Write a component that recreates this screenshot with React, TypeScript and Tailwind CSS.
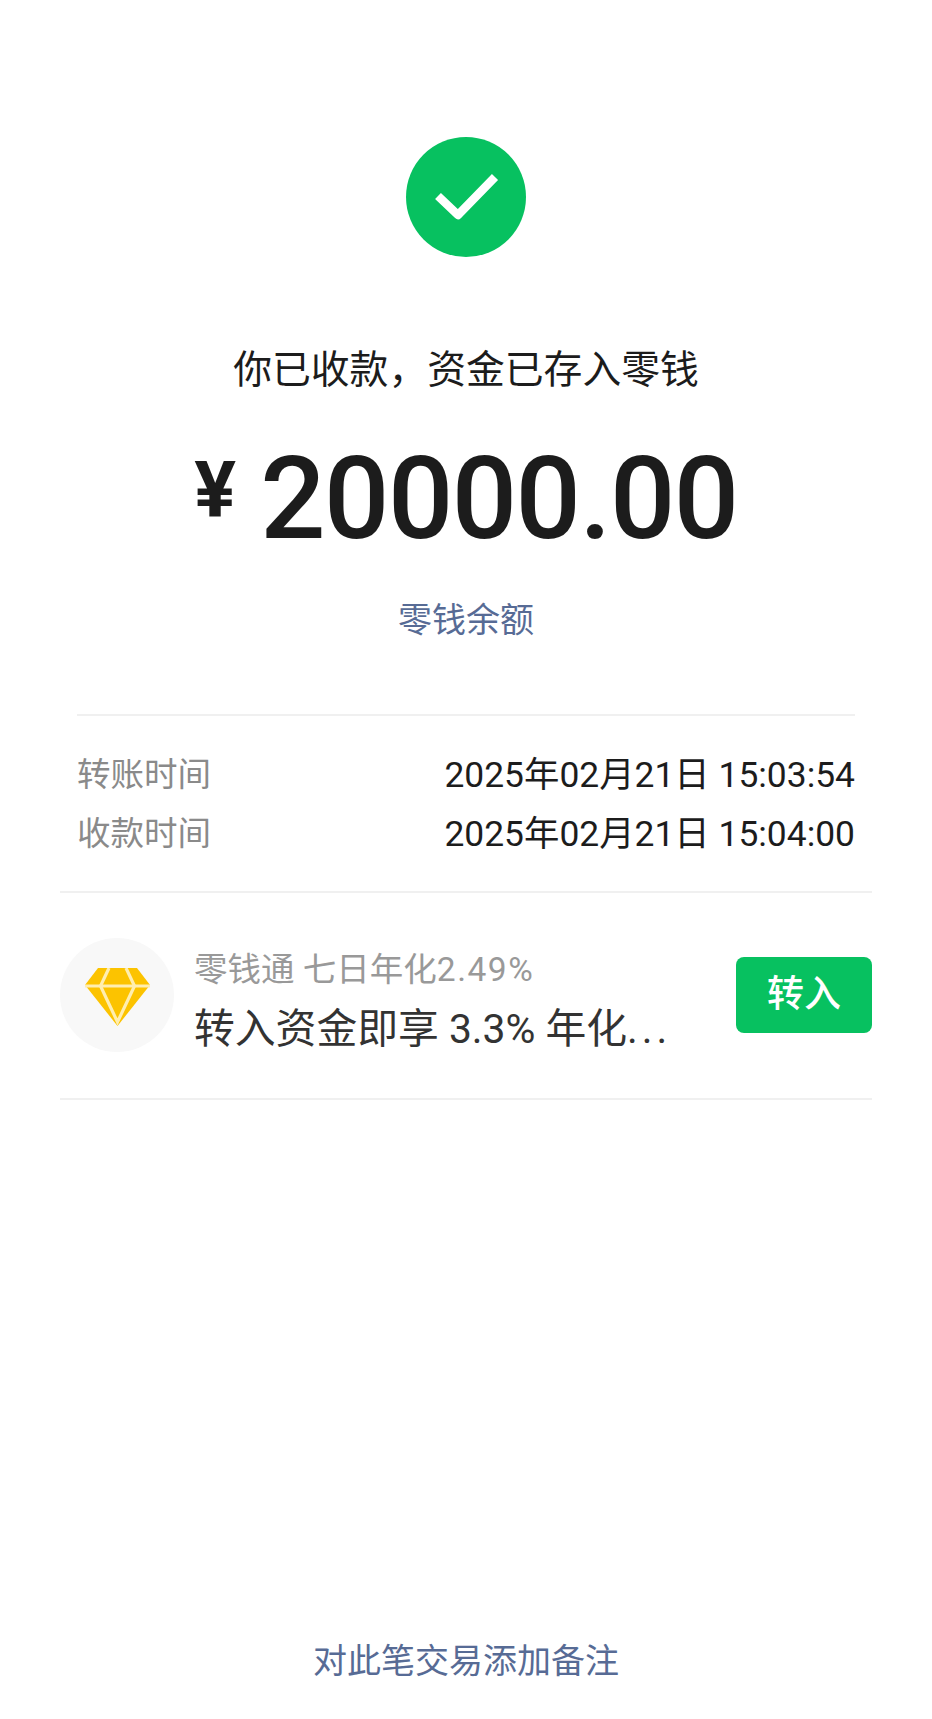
import React from 'react';

const font = "font-['Roboto','Noto_Sans_CJK_SC',sans-serif]";

const Diamond = () => (
  <svg width="65" height="58" viewBox="0 0 65 58" className="mt-[4px]">
    <polygon points="13,0 52,0 65,17 32.5,58 0,17" fill="#fcc300" />
    <g stroke="#ffeeb0" strokeWidth="3.2" fill="none">
      <path d="M0 18H65" />
      <path d="M24 0L15.5 18L32.5 54L49.5 18L41 0" />
    </g>
  </svg>
);

const TimeRow = ({ label, value }: { label: string; value: string }) => (
  <div className="flex items-center justify-between h-[59px]">
    <span className="text-[33.5px] text-[#8a8a8a]">{label}</span>
    <span className="text-[35.4px] text-[#1c1c1c]">{value}</span>
  </div>
);

export default function App() {
  return (
    <div className={`${font} w-[932px] h-[1719px] bg-white flex flex-col items-center overflow-hidden`}>
      <div className="mt-[137px] w-[120px] h-[120px] rounded-full bg-[#07c160] flex items-center justify-center">
        <svg width="64" height="48" viewBox="0 0 64 48" fill="none" className="ml-[2px]">
          <path d="M3 23L23 42L60 4" stroke="white" strokeWidth="8.5" strokeLinejoin="round" />
        </svg>
      </div>

      <div className="mt-[85px] h-[56px] leading-[56px] text-[38.8px] text-[#1c1c1c]">你已收款，资金已存入零钱</div>

      <div className="mt-[40px] h-[120px] flex items-center text-[#1c1c1c]">
        <span className="text-[78px] font-bold mr-[24px] -mt-[14px] leading-none">¥</span>
        <span className="text-[115px] font-medium leading-none tracking-[-1.5px]">20000.00</span>
      </div>

      <div className="mt-[37px] h-[50px] leading-[50px] text-[34px] text-[#576b95]">零钱余额</div>

      <div className="mt-[69px] w-[778px] border-t-2 border-[#f0f0f0] pt-[30px] pb-[27px]">
        <TimeRow label="转账时间" value="2025年02月21日 15:03:54" />
        <TimeRow label="收款时间" value="2025年02月21日 15:04:00" />
      </div>

      <div className="w-[812px] border-t-2 border-b-2 border-[#f0f0f0] h-[209px] pb-[2px] flex items-center">
        <div className="w-[114px] h-[114px] rounded-full bg-[#f8f8f8] flex items-center justify-center shrink-0">
          <Diamond />
        </div>
        <div className="ml-[20px] flex-1 min-w-0 pt-[12px]">
          <div className="text-[33.5px] leading-[46px] text-[#999999]">
            零钱通 七日年化<span className="tracking-[1.5px]">2.49%</span>
          </div>
          <div className="mt-[10px] text-[40.8px] leading-[52px] text-[#333333]">
            转入资金即享 3.3% 年化<span className="tracking-[4px]">...</span>
          </div>
        </div>
        <div className="w-[136px] h-[76px] rounded-lg bg-[#07c160] text-white text-[37px] font-medium flex items-center justify-center shrink-0">转入</div>
      </div>

      <div className="mt-auto mb-[34px] h-[48px] leading-[48px] text-[34px] text-[#576b95]">对此笔交易添加备注</div>
    </div>
  );
}
